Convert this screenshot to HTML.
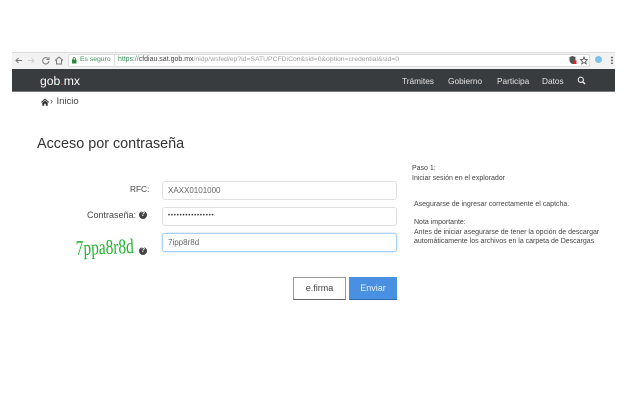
<!DOCTYPE html>
<html lang="es"><head><meta charset="utf-8"><title>Acceso por contraseña</title>
<style>
html,body{margin:0;padding:0;width:640px;height:400px;background:#fff;overflow:hidden}
body{position:relative;font-family:"Liberation Sans",sans-serif;color:#333}
.a{position:absolute;white-space:nowrap}
.input{position:absolute;left:162px;height:17px;border:1px solid #e0e0e0;border-radius:3px;background:#fff;font-size:8px;line-height:17px;color:#666;padding-left:5px;box-sizing:content-box;width:228px}
.nav{position:absolute;top:76px;font-size:8.3px;line-height:11px;color:#e4e4e4;white-space:nowrap}
.q{position:absolute;width:8px;height:8px;border-radius:50%;background:#444;color:#fff;font:bold 7px/8px "Liberation Sans",sans-serif;text-align:center}
.side{position:absolute;font-size:7px;line-height:9.500px;color:#444;white-space:nowrap}
</style></head><body>
<div class="a" style="left:12px;top:52px;width:603px;height:18px;background:#f2f2f2;border-top:1px solid #ddd;box-sizing:border-box"></div>
<div class="a" style="left:68px;top:54px;width:522px;height:13px;background:#fff;border:1px solid #dcdcdc;box-sizing:border-box;border-radius:2px"></div>
<svg class="a" style="left:12px;top:52px" width="60" height="18" fill="none" stroke-width="1">
<path d="M4 8.500H10M6.500 6L4 8.500L6.500 11" stroke="#777"/>
<path d="M16 8.500H22M19.500 6L22 8.500L19.500 11" stroke="#d0d0d0"/>
<path d="M36 6.500A3.200 3.200 0 1 0 37 9M37 5V7.500H34.500" stroke="#777"/>
<path d="M43 8.500L47 5L51 8.500M44.500 8V12H49.500V8" stroke="#777"/>
</svg>
<svg class="a" style="left:71px;top:56px" width="7" height="9"><rect x="1" y="3.500" width="4.500" height="4" fill="#2a8a3c"/><path d="M2 4V2.500A1.300 1.300 0 0 1 4.500 2.500V4" fill="none" stroke="#2a8a3c" stroke-width=".8"/></svg>
<div class="a" style="left:80px;top:55px;font-size:6.800px;line-height:10px;color:#3a9058">Es seguro</div>
<div class="a" style="left:114px;top:55px;width:1px;height:10px;background:#ddd"></div>
<div class="a" style="left:118px;top:55px;font-size:6.800px;line-height:10px;color:#a0a0a0"><span style="color:#3a9058;font-size:6.900px">https://</span><span style="color:#444;font-size:7px">cfdiau.sat.gob.mx</span>/nidp/wsfed/ep?id=SATUPCFDiCon&amp;sid=0&amp;option=credential&amp;sid=0</div>
<svg class="a" style="left:568px;top:55px" width="40" height="12">
<path d="M1.500 2L4.500 1L7.500 2V5.500C7.500 7 6 8.500 4.500 9C3 8.500 1.500 7 1.500 5.500Z" fill="#555"/><rect x="5" y="5.500" width="3.500" height="3.500" fill="#d22"/>
<path d="M16 2L17 4.400L19.500 4.700L17.600 6.300L18.200 8.800L16 7.500L13.800 8.800L14.400 6.300L12.500 4.700L15 4.400Z" fill="none" stroke="#555" stroke-width=".9"/>
</svg>
<div class="a" style="left:595px;top:56px;width:7px;height:7px;border-radius:50%;background:#7fc0ea"></div>
<div class="a" style="left:611px;top:56px;width:2px;height:8px;background:radial-gradient(circle,#666 1px,transparent 1px) 0 0/2px 3px"></div>

<div class="a" style="left:12px;top:69px;width:603px;height:23px;background:#393c3e;border-bottom:1px solid #777;box-sizing:border-box"></div>
<div class="a" style="left:40px;top:73px;font-size:12.200px;line-height:16px;color:#fff">gob<span style="color:#e44">.</span>mx</div>
<div class="nav" style="left:402px">Trámites</div>
<div class="nav" style="left:448px">Gobierno</div>
<div class="nav" style="left:497px">Participa</div>
<div class="nav" style="left:542px">Datos</div>
<svg class="a" style="left:577px;top:76px" width="10" height="10" fill="none" stroke="#e8e8e8"><circle cx="3.800" cy="3.800" r="2.600" stroke-width="1.100"/><path d="M5.800 5.800L8 8" stroke-width="1.500"/></svg>

<svg class="a" style="left:41px;top:98px" width="8" height="8"><path d="M0 4L4 .5L8 4L7.300 4.700L4 1.900L.7 4.700ZM1.300 4.800L4 2.600L6.700 4.800V7.800H4.800V5.800H3.200V7.800H1.300Z" fill="#333"/></svg>
<div class="a" style="left:50px;top:96px;font-size:9px;line-height:11px;color:#444">›&nbsp;<span style="font-size:9.500px;margin-left:1px">Inicio</span></div>

<div class="a" style="left:37px;top:135px;font-size:14.400px;line-height:18px;color:#333">Acceso por contraseña</div>

<div class="a" style="left:130px;top:184px;font-size:8.300px;line-height:11px;color:#444">RFC:</div>
<div class="a" style="left:87px;top:210px;font-size:9px;line-height:11px;color:#444">Contraseña:</div>
<div class="q" style="left:139px;top:211px">?</div>
<div class="q" style="left:139px;top:247px">?</div>

<svg class="a" style="left:70px;top:230px" width="70" height="36"><g transform="translate(6,25) rotate(-2)"><text x="0" y="0" font-family="Liberation Serif" font-size="21" fill="#1db32a" textLength="58" lengthAdjust="spacingAndGlyphs">7ppa8r8d</text></g></svg>

<div class="input" style="top:181px">XAXX0101000</div>
<div class="input" style="top:207px;font-size:6px;letter-spacing:.8px;color:#333">••••••••••••••••</div>
<div class="input" style="top:233px;border-color:#a8d2f5;box-shadow:0 0 2px rgba(102,175,233,.5)">7ipp8r8d</div>

<div class="a" style="left:293px;top:277px;width:53px;height:23px;box-sizing:border-box;border:1px solid #999;border-bottom-color:#666;background:#fff;font-size:9px;line-height:21px;text-align:center;color:#444">e.firma</div>
<div class="a" style="left:349px;top:277px;width:48px;height:23px;background:#4a90e2;border-bottom:1px solid #2c6cb5;box-sizing:border-box;font-size:9px;line-height:22px;text-align:center;color:#e8f0fa">Enviar</div>

<div class="side" style="left:412px;top:164px">Paso 1:<br>Iniciar sesión en el explorador</div>
<div class="side" style="left:414px;top:200px">Asegurarse de ingresar correctamente el captcha.</div>
<div class="side" style="left:414px;top:218px">Nota importante:<br>Antes de iniciar asegurarse de tener la opción de descargar<br>automáticamente los archivos en la carpeta de Descargas</div>
</body></html>
